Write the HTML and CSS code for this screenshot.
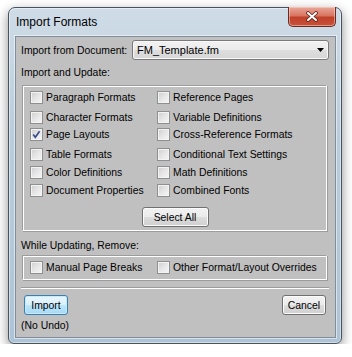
FILE: index.html
```html
<!DOCTYPE html>
<html lang="en">
<head>
  <meta charset="UTF-8">
  <title>Import Formats</title>
  <link rel="stylesheet" href="styles.css">
</head>
<body>
  <div class="window">
    <div class="titlebar">
      <span class="title">Import Formats</span>
      <button class="close-btn">
        <svg width="12" height="11" viewBox="0 0 12 11">
          <path d="M2 2 L10 9 M10 2 L2 9" stroke="#5a2418" stroke-width="3.6" stroke-linecap="round"/>
          <path d="M2 2 L10 9 M10 2 L2 9" stroke="#ffffff" stroke-width="2" stroke-linecap="round"/>
        </svg>
      </button>
    </div>

    <div class="client">
      <div class="doc-row">
        <span>Import from Document:</span>
        <div class="select">
          <span>FM_Template.fm</span>
          <svg class="arrow" width="7" height="4" viewBox="0 0 7 4"><path d="M0 0 H7 L3.5 4 Z" fill="#000"/></svg>
        </div>
      </div>

      <div class="section-label">Import and Update:</div>
      <div class="group update-group">
        <div class="check-grid">
          <label class="check"><span class="box"></span>Paragraph Formats</label>
          <label class="check"><span class="box"></span>Reference Pages</label>
          <label class="check"><span class="box"></span>Character Formats</label>
          <label class="check"><span class="box"></span>Variable Definitions</label>
          <label class="check"><span class="box checked"><svg width="11" height="11" viewBox="0 0 11 11"><path d="M2.2 5.6 L4.3 8.3 L8.6 2.2" stroke="#3a4d8f" stroke-width="1.7" fill="none"/></svg></span>Page Layouts</label>
          <label class="check"><span class="box"></span>Cross-Reference Formats</label>
          <label class="check"><span class="box"></span>Table Formats</label>
          <label class="check"><span class="box"></span>Conditional Text Settings</label>
          <label class="check"><span class="box"></span>Color Definitions</label>
          <label class="check"><span class="box"></span>Math Definitions</label>
          <label class="check"><span class="box"></span>Document Properties</label>
          <label class="check"><span class="box"></span>Combined Fonts</label>
        </div>
        <div class="select-all-row">
          <button class="btn select-all">Select All</button>
        </div>
      </div>

      <div class="section-label remove-label">While Updating, Remove:</div>
      <div class="group remove-group">
        <label class="check"><span class="box"></span>Manual Page Breaks</label>
        <label class="check"><span class="box"></span>Other Format/Layout Overrides</label>
      </div>

      <div class="separator"></div>

      <div class="button-row">
        <button class="btn btn-default">Import</button>
        <button class="btn">Cancel</button>
      </div>
      <div class="note">(No Undo)</div>
    </div>
  </div>
</body>
</html>
```

FILE: styles.css
```css
body {
  margin: 0;
  background: #ffffff;
  font-family: "Liberation Sans", Arial, sans-serif;
  font-size: 10.4px;
  color: #000;
}

.window {
  box-sizing: border-box;
  width: 334px;
  height: 337px;
  margin: 7px 0 0 8px;
  border: 1px solid #47535e;
  border-radius: 7px 7px 6px 6px;
  background: linear-gradient(180deg, #cfdce7 0%, #b9ccdb 40%, #aec4d6 100%);
  box-shadow: 0 4px 12px rgba(0,0,0,0.45), inset 0 0 0 1px rgba(255,255,255,0.45);
  display: flex;
  flex-direction: column;
}

.titlebar {
  height: 28px;
  display: flex;
  align-items: center;
  padding-left: 7px;
}
.title {
  font-size: 12px;
  color: #000;
  margin-top: -1px;
}
.close-btn {
  margin-left: auto;
  margin-right: 5px;
  align-self: flex-start;
  margin-top: -1px;
  width: 48px;
  height: 20px;
  padding: 0;
  border: 1px solid #6a2b22;
  border-top: none;
  border-radius: 0 0 5px 5px;
  background: linear-gradient(180deg, #e9a79a 0%, #d87660 45%, #c0412a 55%, #c9513a 100%);
  box-shadow: inset 0 0 0 1px rgba(255,220,210,0.5);
  display: flex;
  align-items: center;
  justify-content: center;
}

.client {
  box-sizing: border-box;
  height: 302px;
  margin: 0 5px 0 6px;
  border: 1px solid #7f8e9a;
  background: #c0c0c0;
  box-shadow: 0 0 0 1px rgba(255,255,255,0.5);
}

.doc-row {
  display: flex;
  align-items: center;
  height: 20px;
  margin-top: 3px;
  padding-left: 5px;
}
.select {
  box-sizing: border-box;
  margin-left: auto;
  margin-right: 6px;
  width: 197px;
  height: 20px;
  border: 1px solid #7a7a7a;
  border-radius: 3px;
  background: linear-gradient(180deg, #f2f2f2 0%, #ebebeb 50%, #dedede 51%, #d6d6d6 100%);
  box-shadow: inset 0 0 0 1px #f8f8f8;
  display: flex;
  align-items: center;
  padding: 0 4px 0 4px;
  font-size: 11px;
}
.select .arrow {
  margin-left: auto;
}

.section-label {
  height: 13px;
  line-height: 13px;
  margin-top: 6px;
  padding-left: 5px;
}
.remove-label {
  margin-top: 8px;
}

.group {
  box-sizing: border-box;
  width: 305px;
  margin-left: 6px;
  border: 1px solid #9c9c9c;
  border-right-color: #ffffff;
  border-bottom-color: #ffffff;
  box-shadow: inset 1px 1px 0 #ffffff, 1px 1px 0 #9c9c9c;
}
.update-group {
  height: 146px;
  margin-top: 6px;
  padding: 3px 0 0 7px;
}
.check-grid {
  display: grid;
  grid-template-columns: 127px auto;
  grid-template-rows: 20px 17px 20px 18px 18px 16px;
}
.check {
  display: flex;
  align-items: center;
  height: 16px;
  gap: 3px;
  white-space: nowrap;
}
.box {
  box-sizing: border-box;
  width: 13px;
  height: 13px;
  border: 1px solid #8e8f8f;
  background: linear-gradient(135deg, #cdcdcd 0%, #e6e6e6 50%, #f6f6f6 100%);
  box-shadow: inset 0 0 0 1px #f3f3f3;
  display: flex;
  align-items: center;
  justify-content: center;
}
.select-all-row {
  display: flex;
  justify-content: center;
  margin-top: 9px;
  padding-right: 6px;
}
.select-all {
  width: 67px;
}

.remove-group {
  height: 25px;
  margin-top: 3px;
  padding-left: 7px;
  display: grid;
  grid-template-columns: 127px auto;
  align-items: center;
}

.separator {
  width: 308px;
  height: 1px;
  margin: 7px 0 0 5px;
  background: #9c9c9c;
  border-bottom: 1px solid #ffffff;
}

.button-row {
  display: flex;
  justify-content: space-between;
  margin-top: 6px;
  padding: 0 9px 0 8px;
}
.btn {
  box-sizing: border-box;
  min-width: 44px;
  height: 20px;
  padding: 0 4px;
  font-family: "Liberation Sans", Arial, sans-serif;
  font-size: 10.4px;
  color: #000;
  border: 1px solid #707070;
  border-radius: 3px;
  background: linear-gradient(180deg, #f2f2f2 0%, #ebebeb 50%, #dddddd 51%, #cfcfcf 100%);
  box-shadow: inset 0 0 0 1px #fbfbfb;
}
.btn-default {
  border-color: #3c7fb1;
  background: linear-gradient(180deg, #eaf6fd 0%, #d9f0fc 50%, #bee6fd 51%, #a7d9f5 100%);
  box-shadow: inset 0 0 0 1px #c6eafd;
}

.note {
  margin-top: 4px;
  padding-left: 5px;
  line-height: 13px;
}
```
